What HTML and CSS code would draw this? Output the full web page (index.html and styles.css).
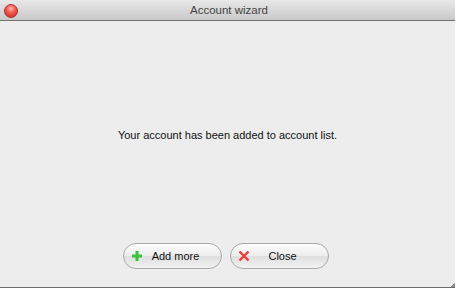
FILE: index.html
```html
<!DOCTYPE html>
<html lang="en">
<head>
  <meta charset="UTF-8" />
  <title>Account wizard</title>
  <link rel="stylesheet" href="styles.css">
</head>
<body>

<div class="window">
  <header class="titlebar">
    <span class="close-dot"></span>
    <h1>Account wizard</h1>
  </header>

  <main class="content">
    <p class="message">Your account has been added to account list.</p>
    <div class="buttons">
      <button class="pill">
        <svg width="12" height="12" viewBox="0 0 12 12"><path d="M6 1v10M1 6h10" stroke="#35c43a" stroke-width="3"/></svg>
        <span>Add more</span>
      </button>
      <button class="pill">
        <svg width="12" height="12" viewBox="0 0 12 12"><path d="M1.5 1.5l9 9M10.5 1.5l-9 9" stroke="#ee3a3a" stroke-width="2.4"/></svg>
        <span>Close</span>
      </button>
    </div>
  </main>

  <span class="grip"></span>
</div>

</body>
</html>
```

FILE: styles.css
```css
* {
  box-sizing: border-box;
}

body {
  margin: 0;
  font-family: "Liberation Sans", Arial, sans-serif;
  background-color: #ededed;
}

.window {
  position: relative;
  width: 455px;
  height: 288px;
  display: flex;
  flex-direction: column;
  background-color: #ededed;
  border-bottom: 1px solid #6b6b6b;
}

.titlebar {
  height: 21px;
  display: flex;
  align-items: center;
  justify-content: center;
  background: linear-gradient(#e8e8e8, #c9c9c9);
  border-bottom: 1px solid #727272;
  position: relative;
}

.titlebar h1 {
  margin: 0 0 0 3px;
  font-size: 11.5px;
  font-weight: normal;
  color: #444;
}

.close-dot {
  position: absolute;
  left: 4px;
  top: 4px;
  width: 14px;
  height: 14px;
  border-radius: 50%;
  background: radial-gradient(circle at 50% 30%, #ffb0a8, #f0544c 45%, #c82a22);
  border: 1px solid #a8302b;
}

.content {
  flex: 1;
  display: flex;
  flex-direction: column;
  align-items: center;
}

.message {
  margin: 108px 0 0;
  font-size: 11px;
  color: #111;
}

.buttons {
  margin-top: auto;
  margin-bottom: 18px;
  margin-right: 3px;
  display: flex;
  gap: 8px;
}

.pill {
  width: 99px;
  height: 26px;
  border-radius: 13px;
  border: 1px solid #a9a9a9;
  background: linear-gradient(#fdfdfd, #ececec 50%, #dedede 51%, #f2f2f2);
  display: flex;
  align-items: center;
  padding: 0 7px;
  font-family: inherit;
  font-size: 11px;
  color: #111;
}

.pill svg {
  flex: none;
}

.pill span {
  flex: 1;
  text-align: center;
  margin-right: 6px;
}

.grip {
  position: absolute;
  right: 0;
  bottom: 0;
  width: 4px;
  height: 4px;
  background: linear-gradient(135deg, transparent 50%, #8a8a8a 50%);
}
```
